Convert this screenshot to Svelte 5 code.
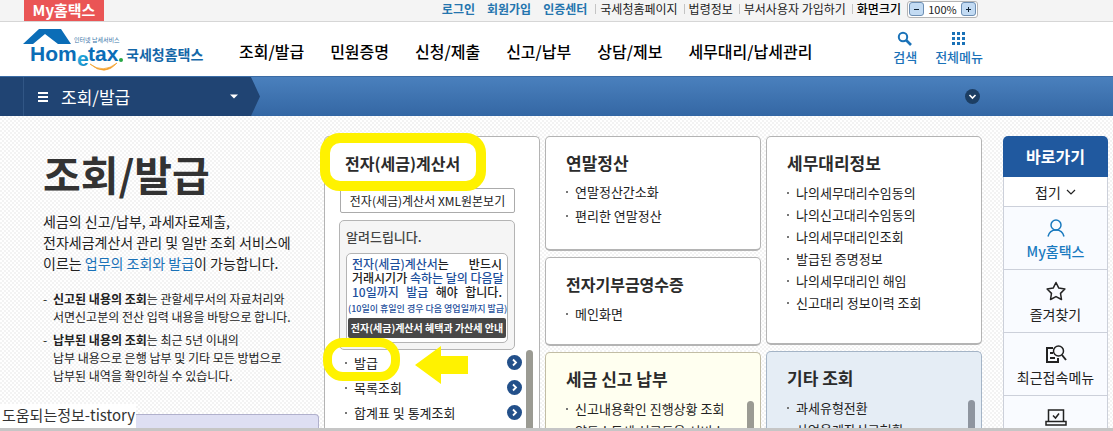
<script>
  const account = ['로그인', '회원가입', '인증센터'];
  const sites = ['국세청홈페이지', '법령정보', '부서사용자 가입하기'];
  const menu = ['조회/발급', '민원증명', '신청/제출', '신고/납부', '상담/제보', '세무대리/납세관리'];
  const invoice = ['발급', '목록조회', '합계표 및 통계조회'];
  const agent = [
    '나의세무대리수임동의',
    '나의신고대리수임동의',
    '나의세무대리인조회',
    '발급된 증명정보',
    '나의세무대리인 해임',
    '신고대리 정보이력 조회'
  ];
</script>

{#snippet links(items)}
  <ul class="links">
    {#each items as item}
      <li><a href="#top">{item}</a></li>
    {/each}
  </ul>
{/snippet}

<div class="page" id="top">
  <div class="topbar">
    <a class="my" href="#top">My홈택스</a>
    <div class="util">
      <div class="account">
        {#each account as item}<a href="#top">{item}</a>{/each}
      </div>
      {#each sites as item}<a class="site" href="#top">{item}</a>{/each}
      <span class="site size">화면크기</span>
      <div class="zoom">
        <button aria-label="축소"><svg width="9" height="9" viewBox="0 0 9 9"><path d="M2 4.5h5" /></svg></button>
        <span>100%</span>
        <button aria-label="확대"><svg width="9" height="9" viewBox="0 0 9 9"><path d="M2 4.5h5M4.5 2v5" /></svg></button>
      </div>
    </div>
  </div>

  <header>
    <a class="logo" href="#top" aria-label="Hometax 국세청홈택스">
      <svg width="182" height="46" viewBox="0 0 182 46">
        <defs>
          <linearGradient id="eg" x1="0" y1="0" x2="1" y2="1">
            <stop offset="0" stop-color="#35c3ea" />
            <stop offset="1" stop-color="#0878bd" />
          </linearGradient>
        </defs>
        <path d="M0 18 16 3h22l10 15H35L22 8 10 18z" fill="#0b6db7" />
        <text class="latin" x="7" y="35">Hom</text>
        <text class="latin e" x="54" y="40">e</text>
        <text class="latin" x="65" y="35">tax</text>
        <circle cx="98" cy="34" r="2" fill="#28a745" />
        <path d="M67 38q13 10 27-1q-12 14-27 1z" fill="#f3a02c" stroke="#f3a02c" stroke-width=".7" />
        <text class="tiny" x="51" y="16">인터넷 납세서비스</text>
        <text class="kr" x="103" y="34">국세청홈택스</text>
      </svg>
    </a>
    <nav>
      {#each menu as item}<a href="#top">{item}</a>{/each}
    </nav>
    <div class="tools">
      <a href="#top">
        <svg width="16" height="16" viewBox="0 0 16 16" fill="none" stroke="#1a72b8"><circle cx="6" cy="6" r="4.2" stroke-width="2" /><path d="m9 9 5 5" stroke-width="2.6" /></svg>
        검색
      </a>
      <a href="#top">
        <svg width="16" height="16" viewBox="0 0 16 16" fill="#1a72b8">
          {#each [1, 6, 11] as y}{#each [1, 6, 11] as x}<rect {x} {y} width="3" height="3" />{/each}{/each}
        </svg>
        전체메뉴
      </a>
    </div>
  </header>

  <div class="bluebar">
    <button class="crumb">
      <svg width="12" height="12" viewBox="0 0 12 12" stroke="#fff" stroke-width="2"><path d="M1 2h10M1 6h10M1 10h10" /></svg>
      <span>조회/발급</span>
      <svg width="8" height="5" viewBox="0 0 8 5" fill="#fff"><path d="M0 .5h8L4 4.5z" /></svg>
    </button>
    <button class="fold" aria-label="펼치기">
      <svg width="15" height="15" viewBox="0 0 15 15"><circle cx="7.5" cy="7.5" r="7.5" fill="#1c3e63" /><path d="m4.500 6 3 3 3-3" fill="none" stroke="#fff" stroke-width="1.600" /></svg>
    </button>
  </div>

  <main>
    <section class="intro">
      <div class="copy">
        <h1>조회/발급</h1>
        <p>세금의 신고/납부, 과세자료제출,<br />전자세금계산서 관리 및 일반 조회 서비스에<br />이르는 <em>업무의 조회와 발급</em>이 가능합니다.</p>
        <ul>
          <li><b>신고된 내용의 조회</b>는 관할세무서의 자료처리와<br />서면신고분의 전산 입력 내용을 바탕으로 합니다.</li>
          <li><b>납부된 내용의 조회</b>는 최근 5년 이내의<br />납부 내용으로 은행 납부 및 기타 모든 방법으로<br />납부된 내역을 확인하실 수 있습니다.</li>
        </ul>
      </div>
      <div class="lavender"></div>
    </section>

    <section class="card invoice">
      <h2 class="long">전자(세금)계산서</h2>
      <button class="xml">전자(세금)계산서 XML원본보기</button>
      <div class="notice">
        <h3>알려드립니다.</h3>
        <div class="paper">
          <p><i>전자(세금)계산서</i>는 반드시</p>
          <p>거래시기가 <i>속하는 달의 다음달</i></p>
          <p><i>10일까지 발급</i> 해야 합니다.</p>
          <p class="note">(10일이 휴일인 경우 다음 영업일까지 발급)</p>
          <a href="#top">전자(세금)계산서 혜택과 가산세 안내</a>
        </div>
      </div>
      <div class="scroll">
        <ul class="links">
          {#each invoice as item}
            <li>
              <a href="#top">{item}</a>
              <svg width="15" height="15" viewBox="0 0 15 15"><circle cx="7.5" cy="7.5" r="7.5" fill="#23508a" /><path d="m6 4.500 3 3-3 3" fill="none" stroke="#fff" stroke-width="1.800" /></svg>
            </li>
          {/each}
        </ul>
        <span class="thumb"></span>
      </div>
      <span class="ring title-ring"></span>
      <span class="ring item-ring"></span>
      <svg class="arrow" width="53" height="38" viewBox="0 0 53 38"><path d="M0 19 26 0v10h27v18H26v10z" fill="#fff200" /></svg>
    </section>

    <div class="column">
      <section class="card year">
        <h2>연말정산</h2>
        {@render links(['연말정산간소화', '편리한 연말정산'])}
      </section>
      <section class="card gift">
        <h2 class="long">전자기부금영수증</h2>
        {@render links(['메인화면'])}
      </section>
      <section class="card cream">
        <h2>세금 신고 납부</h2>
        <div class="scroll">
          {@render links(['신고내용확인 진행상황 조회', '양도소득세 신고도움 서비스'])}
          <span class="thumb"></span>
        </div>
      </section>
    </div>

    <div class="column">
      <section class="card agent">
        <h2>세무대리정보</h2>
        {@render links(agent)}
      </section>
      <section class="card sky">
        <h2>기타 조회</h2>
        <div class="scroll">
          {@render links(['과세유형전환', '사업용계좌신고현황'])}
          <span class="thumb"></span>
        </div>
      </section>
    </div>

    <aside>
      <h2>바로가기</h2>
      <button class="collapse">접기 <svg width="10" height="6" viewBox="0 0 10 6" fill="none" stroke="#222" stroke-width="1.200"><path d="m1 1 4 4 4-4" /></svg></button>
      <a class="on" href="#top">
        <svg width="22" height="20" viewBox="0 0 22 20"><circle cx="11" cy="7" r="5" /><path d="M3 18.500c1-4 4-6.500 8-6.500s7 2.500 8 6.500" /></svg>
        My홈택스
      </a>
      <a href="#top">
        <svg width="22" height="20" viewBox="0 0 22 20"><path d="m11 1.500 2.800 5.600 6.100.9-4.400 4.400 1 6.100-5.500-2.900-5.500 2.900 1-6.100L2.100 8l6.100-.9z" stroke-linejoin="round" /></svg>
        즐겨찾기
      </a>
      <a href="#top">
        <svg width="22" height="20" viewBox="0 0 22 20"><path d="M8 4H2v14h11v-4M5 9h3M5 14h5M17 11l4 5" stroke-width="2" /><circle cx="13.500" cy="7" r="5" /></svg>
        최근접속메뉴
      </a>
      <a href="#top" aria-label="전자신고">
        <svg width="22" height="20" viewBox="0 0 22 20"><path d="M3.500 14V3h15v11M1 14.500h20V18H1zM8 8.500l2.500 2.500L14 6.500" /></svg>
      </a>
    </aside>
  </main>

  <div class="status">도움되는정보-tistory</div>
</div>

<style>
  :global(body) {
    margin: 0;
  }
  .page {
    position: relative;
    box-sizing: border-box;
    display: flex;
    flex-direction: column;
    height: 100vh;
    overflow: hidden;
    border-bottom: 3px solid #c6c6c6;
    background: #fff;
    color: #222;
    font-family: 'Noto Sans CJK KR', sans-serif;
    font-size: 13px;
  }
  .page * {
    box-sizing: border-box;
  }
  a {
    color: inherit;
    text-decoration: none;
    white-space: nowrap;
  }
  button {
    margin: 0;
    padding: 0;
    border: 0;
    background: none;
    color: inherit;
    font: inherit;
    white-space: nowrap;
  }
  svg {
    display: block;
    flex: none;
  }
  h1,
  h2,
  h3,
  p,
  ul {
    margin: 0;
    padding: 0;
  }
  ul {
    list-style: none;
  }

  .topbar {
    display: flex;
    flex: none;
    justify-content: space-between;
    height: 22px;
    padding: 0 135px 0 24px;
    border-bottom: 1px solid #d6d6d6;
    background: #f4f4f4;
  }
  .my {
    width: 80px;
    height: 21px;
    background: #ea5555;
    color: #fff;
    font-size: 15px;
    font-weight: 700;
    line-height: 19px;
    text-align: center;
  }
  .util {
    display: flex;
    align-items: center;
    height: 18px;
    font-size: 12px;
    line-height: 18px;
  }
  .account {
    display: flex;
    gap: 12px;
    padding-right: 8px;
    color: #2475ae;
    font-weight: 700;
  }
  .site {
    display: flex;
    align-items: center;
    padding-right: 6px;
  }
  .site::before {
    width: 1px;
    height: 10px;
    margin-right: 4px;
    background: #c4c4c4;
    content: '';
  }
  .size {
    color: #000;
    font-weight: 500;
  }
  .zoom {
    display: flex;
    align-items: center;
    justify-content: space-between;
    width: 71px;
    height: 17px;
    padding: 0 1px;
    border: 1px solid #b5b5b5;
    border-radius: 3px;
    background: #fff;
    font-size: 11px;
    line-height: 15px;
  }
  .zoom button {
    display: grid;
    place-items: center;
    width: 15px;
    height: 14px;
    border: 1px solid #6d8fb4;
    border-radius: 3px;
    background: #c3dbf3;
  }
  .zoom path {
    stroke: #123;
    stroke-width: 1;
  }

  header {
    display: flex;
    flex: none;
    align-items: center;
    height: 54px;
    padding: 0 130px 0 23px;
  }
  .logo {
    flex: none;
  }
  .latin {
    fill: #0b6db7;
    font-family: 'Liberation Sans', sans-serif;
    font-size: 21px;
    font-weight: 700;
  }
  .latin.e {
    fill: url(#eg);
  }
  .tiny {
    fill: #3a75a8;
    font-size: 6px;
  }
  .kr {
    fill: #1467a8;
    font-size: 14px;
    font-weight: 700;
  }
  nav {
    display: flex;
    gap: 26px;
    padding: 4px 0 0 34px;
    color: #000;
    font-size: 16px;
    font-weight: 500;
    line-height: 24px;
  }
  .tools {
    display: flex;
    gap: 18px;
    margin-left: auto;
    color: #1a72b8;
    font-weight: 500;
    line-height: 20px;
  }
  .tools a {
    display: flex;
    flex-direction: column;
    align-items: center;
  }

  .bluebar {
    display: flex;
    flex: none;
    align-items: center;
    justify-content: space-between;
    height: 40px;
    padding-right: 133px;
    border-top: 1px solid #3b6ca5;
    background: linear-gradient(#4a80bd, #3467a4);
  }
  .crumb {
    display: flex;
    align-items: center;
    width: 260px;
    height: 100%;
    padding: 0 22px 0 37px;
    background: linear-gradient(90deg, #204473 23px, #315685 23px 24px, #204473 24px);
    clip-path: polygon(0 0, 251px 0, 100% 50%, 251px 100%, 0 100%);
    color: #fff;
    font-size: 17px;
  }
  .crumb span {
    flex: 1;
    padding-left: 12px;
    text-align: left;
  }

  main {
    display: grid;
    flex: 1;
    grid-template-columns: minmax(0, 296fr) repeat(3, minmax(0, 216fr)) 126px;
    gap: 5px;
    min-height: 0;
    padding: 20px 0 0 23px;
    background: repeating-conic-gradient(#f3f3f3 0 25%, #fff 0 50%) 0 0 / 4px 4px;
  }
  .intro {
    display: flex;
    flex-direction: column;
    min-height: 0;
  }
  .copy {
    flex: none;
    height: 278px;
    padding: 11px 0 0 20px;
    white-space: nowrap;
  }
  h1 {
    color: #333;
    font-size: 41px;
    font-weight: 700;
    line-height: 52px;
  }
  .copy p {
    padding-top: 12px;
    font-size: 14px;
    line-height: 21px;
  }
  em {
    color: #1a72b8;
    font-style: normal;
  }
  .copy ul {
    display: grid;
    gap: 5px;
    padding-top: 16px;
    font-size: 12px;
    line-height: 18px;
  }
  .copy li {
    position: relative;
    padding-left: 10px;
  }
  .copy li::before {
    position: absolute;
    left: 0;
    content: '-';
  }
  .lavender {
    flex: 1;
    border: 1px solid #b0b0cc;
    border-bottom: 0;
    border-radius: 4px 4px 0 0;
    background: #dedff3;
  }

  .column {
    display: flex;
    flex-direction: column;
    gap: 6px;
    min-height: 0;
  }
  .card {
    position: relative;
    flex: none;
    padding: 13px 0 0 20px;
    border: 1px solid #b4b4b4;
    border-bottom-width: 2px;
    border-radius: 5px;
    background: #fff;
  }
  .card h2 {
    color: #2b2b2b;
    font-size: 17px;
    font-weight: 700;
    line-height: 26px;
  }
  .card h2.long {
    font-size: 16px;
  }
  .links {
    padding-top: 6px;
    line-height: 22px;
  }
  .links li {
    display: flex;
    align-items: center;
  }
  .links li::before {
    width: 2px;
    height: 2px;
    margin-right: 7px;
    background: #777;
    content: '';
  }
  .year {
    height: 115px;
  }
  .year .links {
    padding-top: 4px;
    line-height: 24px;
  }
  .gift {
    height: 89px;
  }
  .agent {
    height: 209px;
  }
  .cream,
  .sky {
    flex: 1;
    min-height: 0;
    overflow: hidden;
    border-bottom: 0;
    border-radius: 5px 5px 0 0;
  }
  .cream {
    border-color: #c2bda5;
    background: #fffff0;
  }
  .sky {
    border-color: #a4b4c6;
    background: #e5edf5;
  }
  .scroll {
    display: flex;
    justify-content: space-between;
    padding-right: 6px;
  }
  .thumb {
    width: 7px;
    height: 90px;
    margin-top: 9px;
    border-radius: 4px 4px 0 0;
    background: #9b9b93;
  }
  .sky .thumb {
    background: #8e959f;
  }

  .invoice {
    min-height: 0;
    border-bottom: 0;
    border-radius: 5px 5px 0 0;
  }
  .xml {
    display: block;
    width: 175px;
    height: 25px;
    margin: 12px 0 7px -5px;
    border: 1px solid #ababab;
    border-radius: 2px;
    background: #fff;
    font-size: 12px;
  }
  .notice {
    width: 176px;
    height: 130px;
    margin-left: -6px;
    padding: 5px 6px 0;
    border: 1px solid #b4b4b4;
    border-radius: 5px;
    background: #f5f5f5;
  }
  h3 {
    color: #444;
    font-size: 13px;
    font-weight: 500;
    line-height: 22px;
  }
  .paper {
    height: 90px;
    margin-top: 5px;
    padding: 3px 1px 1px;
    border: 1px solid #b4b4b4;
    border-radius: 5px;
    background: #fff;
    white-space: nowrap;
  }
  .paper p {
    padding: 0 4px;
    font-size: 12px;
    font-weight: 500;
    line-height: 14px;
    text-align-last: justify;
  }
  .paper p.note {
    padding: 0;
    color: #1d4f9c;
    font-size: 9px;
    line-height: 19px;
    text-align-last: center;
  }
  .paper i {
    color: #1d4f9c;
    font-style: normal;
  }
  .paper a {
    display: block;
    height: 20px;
    border-radius: 2px;
    background: #484848;
    color: #fff;
    font-size: 10px;
    font-weight: 700;
    line-height: 19px;
    text-align: center;
  }
  .invoice .links {
    flex: 1;
    padding-top: 0;
    line-height: 25px;
  }
  .invoice .links a {
    flex: 1;
  }
  .invoice .thumb {
    margin: 0 0 0 4px;
  }
  .ring {
    position: absolute;
    border: 10px solid #fff200;
    border-radius: 20px;
  }
  .title-ring {
    top: -4px;
    left: -5px;
    width: 166px;
    height: 58px;
  }
  .item-ring {
    top: 201px;
    left: -2px;
    width: 77px;
    height: 43px;
    border-width: 9px;
  }
  .arrow {
    position: absolute;
    top: 209px;
    left: 90px;
  }

  aside {
    display: flex;
    flex-direction: column;
    min-height: 0;
    margin: 0 5px 0 16px;
    overflow: hidden;
    border-radius: 5px 5px 0 0;
    background: #f9fbff;
    font-size: 14px;
  }
  aside h2 {
    flex: none;
    background: #20599f;
    color: #fff;
    font-size: 16px;
    font-weight: 700;
    line-height: 41px;
    text-align: center;
  }
  aside a,
  .collapse {
    display: flex;
    flex: none;
    align-items: center;
    justify-content: center;
    border: solid #ccd0da;
    border-width: 0 1px 1px;
  }
  .collapse {
    gap: 5px;
    height: 30px;
    background: #fff;
  }
  aside a {
    flex-direction: column;
    justify-content: flex-start;
    gap: 3px;
    height: 63px;
    padding-top: 11px;
    line-height: 21px;
  }
  aside a svg {
    fill: none;
    stroke: #222;
    stroke-width: 1.5px;
  }
  aside .on {
    color: #1a7abf;
    font-weight: 500;
  }
  aside .on svg {
    stroke: #1a7abf;
  }

  .status {
    position: absolute;
    bottom: 0;
    left: 0;
    padding: 0 1px 2px 2px;
    background: #fff;
    color: #333;
    font-size: 15px;
    line-height: 22px;
  }
</style>
